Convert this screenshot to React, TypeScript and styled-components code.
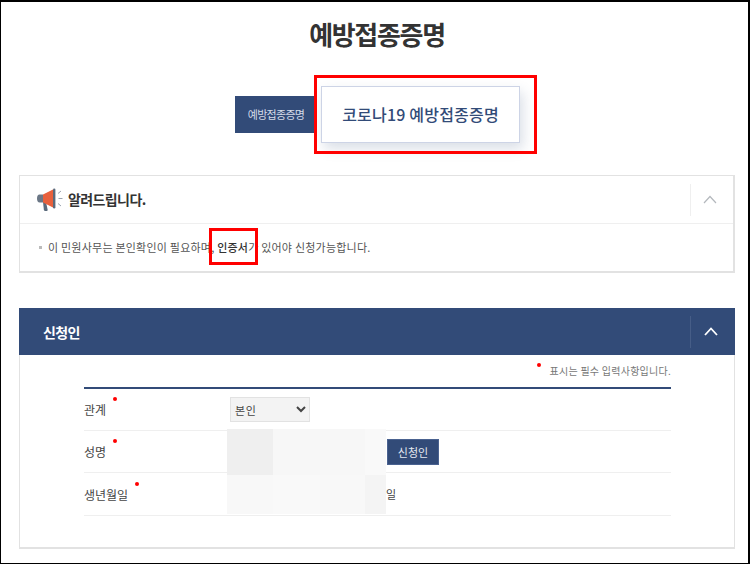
import React from 'react'
import styled, { createGlobalStyle } from 'styled-components'

const navy = '#324b78'

const GlobalStyle = createGlobalStyle`
  html, body { margin: 0; padding: 0; background: #fff; }
  body { font-family: "Noto Sans CJK KR", "Noto Sans", sans-serif; color: #444; }
`

const Megaphone = () => (
  <svg width="28" height="26" viewBox="0 0 28 26">
    <path d="M7 15l3 0 1.600 7.500c.2 1-.4 1.500-1.300 1.500H9.200c-.7 0-1.100-.4-1.300-1z" fill="#5a6a7c" />
    <path d="M3.500 7.500H7v8H3.500C2 15.500 1 14 1 11.500S2 7.500 3.500 7.500z" fill="#6b7786" />
    <path d="M7 7.500L17 2.500v18L7 15.500z" fill="#e8603c" />
    <rect x="17" y="1.500" width="2.400" height="20" rx="1.200" fill="#5a6a7c" />
    <path d="M22 6.500l3-2.500M22.500 11.500h4M22 16.500l3 2.500" stroke="#9aa4b0" strokeWidth="1" fill="none" />
  </svg>
)

const Chevron = ({ color, weight }: { color: string; weight: number }) => (
  <svg width="14" height="9" viewBox="0 0 14 9">
    <path d="M1 8l6-6.500L13 8" fill="none" stroke={color} strokeWidth={weight} />
  </svg>
)

export default function App() {
  return (
    <Frame>
      <GlobalStyle />
      <Title>예방접종증명</Title>
      <Tabs>
        <SideTab>예방접종증명</SideTab>
        <ActiveTab>
          코로나19 예방접종증명
          <TabMark />
        </ActiveTab>
      </Tabs>

      <Notice>
        <NoticeHead>
          <Megaphone />
          <NoticeTitle>알려드립니다.</NoticeTitle>
          <Toggle>
            <Chevron color="#b4b8bd" weight={1.2} />
          </Toggle>
        </NoticeHead>
        <NoticeBody>
          <Square />이 민원사무는 본인확인이 필요하며, <Strong>인증서<WordMark /></Strong>가 있어야 신청가능합니다.
        </NoticeBody>
      </Notice>

      <Panel>
        <PanelHead>
          <PanelTitle>신청인</PanelTitle>
          <DarkToggle>
            <Chevron color="#fff" weight={1.8} />
          </DarkToggle>
        </PanelHead>
        <PanelBody>
          <Hint>
            <Dot />
            표시는 필수 입력사항입니다.
          </Hint>
          <Form>
            <Row $h={42}>
              <Label>관계<LabelDot /></Label>
              <Value>
                <Select defaultValue="본인">
                  <option>본인</option>
                </Select>
              </Value>
            </Row>
            <Row $h={42}>
              <Label>성명<LabelDot /></Label>
              <Value>
                <Masked $h={46}>
                  <Blur $w={46} $c="#efefef" />
                  <Blur $w={92} $c="#f7f7f7" />
                  <Blur $w={21} $c="#f9f9f9" />
                </Masked>
                <SmallButton>신청인</SmallButton>
              </Value>
            </Row>
            <Row $h={43}>
              <Label>생년월일<LabelDot /></Label>
              <Value>
                <Masked $h={39}>
                  <Blur $w={46} $c="#f8f8f8" />
                  <Blur $w={47} $c="#f9f9f9" />
                  <Blur $w={45} $c="#f8f8f8" />
                  <Blur $w={21} $c="#f4f4f4" />
                </Masked>
                <DayText>일</DayText>
              </Value>
            </Row>
          </Form>
        </PanelBody>
      </Panel>
    </Frame>
  )
}

const Frame = styled.div`
  width: 750px;
  height: 564px;
  box-sizing: border-box;
  border: solid #000;
  border-width: 2px 2px 1px 1px;
  padding: 0 13px 0 18px;
  overflow: hidden;
`
const Title = styled.h1`
  margin: 12px 0 0;
  height: 40px;
  font-size: 26px;
  line-height: 40px;
  font-weight: 700;
  letter-spacing: -1.3px;
  text-align: center;
  color: #333;
`
const Tabs = styled.div`
  display: flex;
  justify-content: center;
  align-items: center;
  gap: 4px;
  margin-top: 32px;
  padding-left: 1px;
`
const SideTab = styled.div`
  width: 82px;
  height: 37px;
  background: ${navy};
  color: #d5dbe8;
  font-size: 11px;
  letter-spacing: -0.7px;
  line-height: 36px;
  text-align: center;
`
const ActiveTab = styled.div`
  position: relative;
  width: 199px;
  height: 57px;
  box-sizing: border-box;
  background: #fff;
  border: 1px solid #cdd4e6;
  box-shadow: 3px 6px 12px rgba(50, 75, 120, 0.18);
  color: ${navy};
  font-size: 16px;
  font-weight: 500;
  line-height: 54px;
  letter-spacing: 0.2px;
  text-align: center;
`
const TabMark = styled.span`
  position: absolute;
  left: -8px;
  top: -12px;
  width: 223px;
  height: 79px;
  box-sizing: border-box;
  border: 3px solid #f00;
`
const Notice = styled.section`
  margin-top: 32px;
  height: 98px;
  box-sizing: border-box;
  border: 1px solid #e2e2e2;
  border-bottom-width: 2px;
  border-right-width: 2px;
`
const NoticeHead = styled.div`
  display: flex;
  align-items: center;
  height: 48px;
  box-sizing: border-box;
  padding-left: 16px;
  border-bottom: 1px solid #efefef;
`
const NoticeTitle = styled.h2`
  margin: 0 0 2px 4px;
  font-size: 14px;
  font-weight: 700;
  letter-spacing: -0.6px;
  color: #333;
`
const Toggle = styled.div`
  display: flex;
  align-items: center;
  justify-content: center;
  margin-left: auto;
  width: 38px;
  height: 32px;
  padding-right: 4px;
  border-left: 1px solid #efefef;
`
const NoticeBody = styled.p`
  margin: 0;
  padding: 14px 0 0 19px;
  font-size: 11px;
  line-height: 18px;
  letter-spacing: 0.22px;
  color: #555;
`
const Square = styled.i`
  display: inline-block;
  width: 3px;
  height: 3px;
  margin: 0 6px 3px 0;
  background: #bbb;
`
const Strong = styled.strong`
  position: relative;
  font-weight: 500;
  color: #333;
`
const WordMark = styled.span`
  position: absolute;
  left: -8px;
  top: -11px;
  width: 49px;
  height: 37px;
  box-sizing: border-box;
  border: 3px solid #f00;
`
const Panel = styled.section`
  margin-top: 35px;
  height: 241px;
  box-sizing: border-box;
  border: 1px solid #e2e2e2;
  border-top: 0;
  border-bottom-width: 2px;
`
const PanelHead = styled.div`
  display: flex;
  align-items: center;
  height: 47px;
  margin: 0 -1px;
  padding-left: 24px;
  background: ${navy};
`
const PanelTitle = styled.h2`
  margin: 0;
  font-size: 14px;
  font-weight: 700;
  letter-spacing: -0.6px;
  color: #fff;
`
const DarkToggle = styled(Toggle)`
  width: 40px;
  border-left-color: #465d87;
`
const PanelBody = styled.div`
  padding: 0 63px 0 64px;
`
const Hint = styled.div`
  position: relative;
  height: 32px;
  font-size: 10px;
  line-height: 32px;
  letter-spacing: 0.25px;
  text-align: right;
  color: #777;
`
const Dot = styled.i`
  position: absolute;
  right: 130px;
  top: 8px;
  width: 4px;
  height: 4px;
  border-radius: 50%;
  background: #f00;
`
const Form = styled.div`
  border-top: 2px solid ${navy};
`
const Row = styled.div<{ $h: number }>`
  display: grid;
  grid-template-columns: 143px 1fr;
  grid-template-rows: 100%;
  align-items: center;
  height: ${(p) => p.$h}px;
  box-sizing: border-box;
  border-bottom: 1px solid #efefef;
`
const Label = styled.div`
  position: relative;
  width: fit-content;
  font-size: 12px;
  color: #444;
`
const LabelDot = styled.i`
  position: absolute;
  right: -11px;
  top: -4px;
  width: 4px;
  height: 4px;
  border-radius: 50%;
  background: #f00;
`
const Value = styled.div`
  display: flex;
  align-items: center;
`
const Select = styled.select`
  width: 80px;
  height: 25px;
  margin-left: 3px;
  font-family: inherit;
  font-size: 11px;
  letter-spacing: 0.6px;
  border: 1px solid #e2e2e2;
  background-color: #f3f3f3;
  color: #444;
`
const Masked = styled.div<{ $h: number }>`
  display: flex;
  height: ${(p) => p.$h}px;
`
const Blur = styled.span<{ $w: number; $c: string }>`
  width: ${(p) => p.$w}px;
  background: ${(p) => p.$c};
`
const SmallButton = styled.button`
  width: 52px;
  height: 26px;
  margin-left: 1px;
  padding: 0;
  border: 1px solid #4a6290;
  background: ${navy};
  color: #e4e8f0;
  font-family: inherit;
  font-size: 11px;
`
const DayText = styled.span`
  font-size: 11px;
  color: #444;
`
